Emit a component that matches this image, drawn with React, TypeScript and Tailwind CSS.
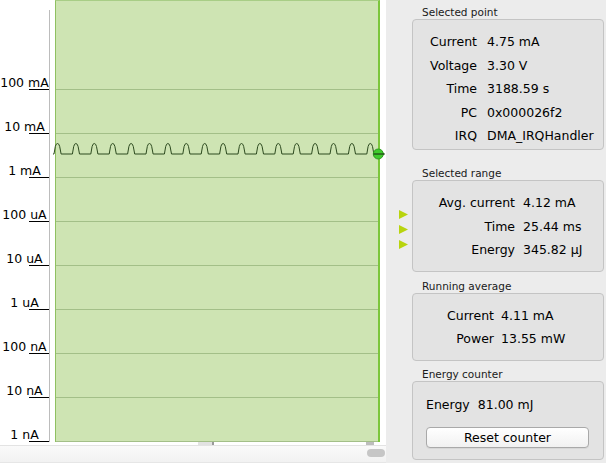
import React from "react";

const labels = ["100 mA", "10 mA", "1 mA", "100 uA", "10 uA", "1 uA", "100 nA", "10 nA", "1 nA"];

function wavePath(): string {
  let d = "M -2 154";
  for (let k = 0; k < 18; k++) {
    const p = 2.5 + 18.4 * k;
    d += ` L ${p - 3.5} 154 L ${p - 2.2} 146.5 Q ${p - 1.5} 143.5 ${p} 143.5 Q ${p + 1.5} 143.5 ${p + 2.2} 146.5 L ${p + 3.6} 154`;
  }
  d += " L 330 154";
  return d;
}

function Row({ label, value }: { label: string; value: string }) {
  return (
    <>
      <div className="text-right">{label}</div>
      <div>{value}</div>
    </>
  );
}

export default function App() {
  return (
    <div className="flex w-[606px] h-[463px] overflow-hidden font-['DejaVu_Sans',sans-serif] text-black text-[12.5px]">
      {/* Left: chart */}
      <div className="w-[386px] flex flex-col bg-white">
        <div className="flex h-[442px]">
          {/* axis labels */}
          <div className="w-[49px] flex flex-col">
            {labels.map((l, i) => (
              <div key={l} className={`${i === 0 ? "h-[90px]" : "h-[44px]"} flex flex-col justify-end`}>
                <div className="text-center leading-[12px] whitespace-nowrap">{l}</div>
                <div className="ml-[29px] w-[20px] h-px bg-black" />
              </div>
            ))}
          </div>
          <div className="w-px mt-[10px] bg-[#bcbcbc]" />
          <div className="w-[5px]" />
          {/* plot */}
          <div className="relative w-[325px] h-[442px] bg-[#cee4b3] border-t border-l border-t-[#a8cd86] border-l-[#8fc061] border-r-2 border-r-[#7cc63b] flex flex-col">
            <div className="h-[89px] shrink-0 border-b border-[#a3bf88]" />
            {Array.from({ length: 8 }).map((_, i) => (
              <div key={i} className="h-[44px] shrink-0 border-b border-[#a3bf88]" />
            ))}
            <svg className="absolute left-[-1px] top-[-1px] overflow-visible" width="325" height="442">
              <path d={wavePath()} fill="none" stroke="#2d4a1f" strokeWidth="1" />
              <circle cx="323.3" cy="154" r="5" fill="#3fcb2c" stroke="#2c9c1c" strokeWidth="1" />
              <line x1="318.5" y1="154" x2="329" y2="154" stroke="#1f3f14" strokeWidth="1.2" />
            </svg>
          </div>
          <div className="w-[6px]" />
        </div>
        {/* bottom strip & scrollbar */}
        <div className="h-[3px] flex">
          <div className="w-[198px]" />
          <div className="w-[14px] bg-[#e2e2e2]" />
          <div className="w-[2px] bg-[#9a9a9a]" />
          <div className="w-[152px]" />
          <div className="w-[8px] bg-[#bdbdbd]" />
        </div>
        <div className="h-px bg-[#e3e3e3]" />
        <div className="flex-1 flex justify-end items-start pt-[3px] pr-[1px] bg-gradient-to-b from-[#fafafa] to-[#f2f2f2] border-b border-[#e6e6e6]">
          <div className="w-[18px] h-[8px] rounded-full bg-[#c6c6c6]" />
        </div>
      </div>

      {/* Right: panels */}
      <div className="relative w-[220px] bg-[#ececec] pl-[26px] pr-[2px] pt-[6px] flex flex-col">
        {/* Selected point */}
        <div className="text-[10.5px] leading-[13px] h-[13px] pl-[10px] text-[#1a1a1a]">Selected point</div>
        <div className="h-[131px] rounded-[4px] border border-[#c4c4c4] bg-[#e3e3e3] pt-[10px]">
          <div className="grid grid-cols-[64px_auto] gap-x-[10px] leading-[23.5px]">
            <Row label="Current" value="4.75 mA" />
            <Row label="Voltage" value="3.30 V" />
            <Row label="Time" value="3188.59 s" />
            <Row label="PC" value="0x000026f2" />
            <Row label="IRQ" value="DMA_IRQHandler" />
          </div>
        </div>

        {/* Selected range */}
        <div className="mt-[17px] text-[10.5px] leading-[13px] h-[13px] pl-[10px] text-[#1a1a1a]">Selected range</div>
        <div className="h-[92px] rounded-[4px] border border-[#c4c4c4] bg-[#e3e3e3] pt-[10px]">
          <div className="grid grid-cols-[102px_auto] gap-x-[8px] leading-[23.5px]">
            <Row label="Avg. current" value="4.12 mA" />
            <Row label="Time" value="25.44 ms" />
            <Row label="Energy" value="345.82 µJ" />
          </div>
        </div>

        {/* Running average */}
        <div className="mt-[8px] text-[10.5px] leading-[13px] h-[13px] pl-[10px] text-[#1a1a1a]">Running average</div>
        <div className="h-[68px] rounded-[4px] border border-[#c4c4c4] bg-[#e3e3e3] pt-[11px]">
          <div className="grid grid-cols-[81px_auto] gap-x-[7px] leading-[22.5px]">
            <Row label="Current" value="4.11 mA" />
            <Row label="Power" value="13.55 mW" />
          </div>
        </div>

        {/* Energy counter */}
        <div className="mt-[7px] text-[10.5px] leading-[13px] h-[13px] pl-[10px] text-[#1a1a1a]">Energy counter</div>
        <div className="h-[79px] rounded-[4px] border border-[#c4c4c4] bg-[#e3e3e3] pt-[11px] pl-[13px]">
          <div className="leading-[23.5px] flex gap-x-[8px]">
            <span>Energy</span>
            <span>81.00 mJ</span>
          </div>
          <button className="mt-[10px] w-[163px] h-[21px] rounded-[4px] border border-[#a9a9a9] bg-gradient-to-b from-white to-[#f1f1f1] shadow-[0_1px_0_rgba(0,0,0,0.05)] text-[12.5px] leading-[19px] text-center">
            Reset counter
          </button>
        </div>

        {/* range markers */}
        <div className="absolute left-[13px] top-[210px] flex flex-col gap-[6px]">
          {[0, 1, 2].map((i) => (
            <svg key={i} width="9" height="9" viewBox="0 0 9 9">
              <polygon points="0,0 9,4.5 0,9" fill="#b8d40e" />
            </svg>
          ))}
        </div>
      </div>
    </div>
  );
}
